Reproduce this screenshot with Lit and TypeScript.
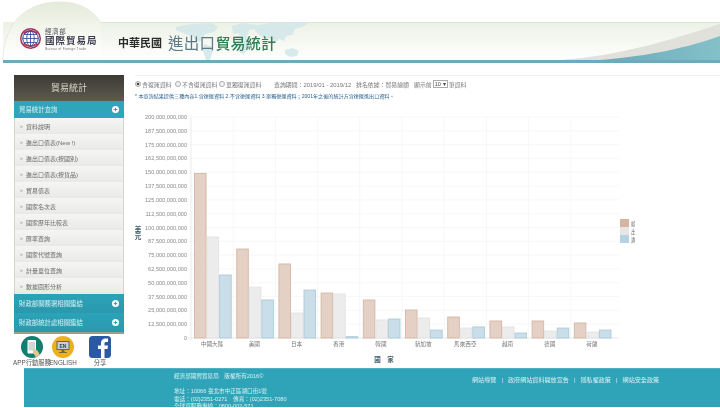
import { LitElement, html, css, svg } from "lit";
import { customElement } from "lit/decorators.js";

const MENU = [
  "資料說明",
  "進出口值表(New !)",
  "進出口值表(按國別)",
  "進出口值表(按貨品)",
  "貿易值表",
  "國家名次表",
  "國家歷年比較表",
  "匯率查詢",
  "國家代號查詢",
  "計量單位查詢",
  "數據圖形分析",
];

// values in billions: total, export, import
const DATA: [string, number, number, number][] = [
  ["中國大陸", 148.9, 91.4, 57],
  ["美國", 80.5, 46, 34.4],
  ["日本", 67, 22.6, 43.4],
  ["香港", 40.7, 39.8, 1.2],
  ["韓國", 34.4, 16.3, 17.2],
  ["新加坡", 25.3, 18.1, 7.2],
  ["馬來西亞", 19, 9, 10],
  ["越南", 15.4, 10, 4.5],
  ["德國", 15.4, 6.3, 9],
  ["荷蘭", 13.6, 5.4, 7.2],
];

const SERIES = [
  { name: "總額", fill: "#e4d0c4", line: "#d3b8a8" },
  { name: "出口", fill: "#ececec", line: "#e3e3e3" },
  { name: "進口", fill: "#c9dee8", line: "#aecbd9" },
];

const X0 = 192;
const Y0 = 338;
const CAT_W = 42.2;
const PX_PER_B = 221 / 200;

const fmt = (n: number) => n.toLocaleString("en-US");

@customElement("app-root")
export class AppRoot extends LitElement {
  static styles = css`
    :host {
      display: block;
      width: 720px;
      height: 408px;
      overflow: hidden;
      background: #fff;
      font-family: "Liberation Sans", "Noto Sans CJK TC", sans-serif;
      color: #666;
      filter: blur(0.3px);
    }
    .header {
      position: relative;
      height: 64px;
    }
    .header-art {
      position: absolute;
      inset: 0;
    }
    .brand {
      position: relative;
      display: flex;
      align-items: flex-start;
      padding: 28px 0 0 20px;
    }
    .logo-text {
      display: flex;
      flex-direction: column;
      margin-left: 4px;
      width: 54px;
      color: #4a4a55;
      white-space: nowrap;
    }
    .org-top {
      font-size: 6.5px;
      line-height: 7px;
      letter-spacing: 0.6px;
    }
    .org-name {
      font-size: 9.5px;
      line-height: 12px;
      font-weight: 700;
      letter-spacing: 1px;
      color: #3c3c50;
    }
    .org-en {
      font-size: 3.4px;
      line-height: 4px;
      letter-spacing: 0.2px;
      color: #777;
    }
    .title {
      display: flex;
      align-items: center;
      margin-left: 19px;
      margin-top: 5px;
      height: 18px;
      white-space: nowrap;
    }
    .title-roc {
      font-size: 11px;
      font-weight: 700;
      color: #2b2b2b;
      margin-right: 6px;
    }
    .title-a {
      font-size: 15.5px;
      letter-spacing: 0.3px;
      color: #5b7a88;
    }
    .title-b {
      font-size: 15px;
      letter-spacing: 0.2px;
      font-weight: 500;
      color: #2f7d52;
    }
    .body {
      display: flex;
      height: 304px;
      padding-top: 11px;
      box-sizing: border-box;
    }
    .side {
      width: 110px;
      margin-left: 14px;
      flex: none;
    }
    .menu {
      border-bottom: 2px solid #9c9c94;
    }
    .menu-title {
      height: 26px;
      line-height: 26px;
      text-align: center;
      font-size: 9px;
      color: #d9d6c8;
      background: linear-gradient(#3c3a33, #5d5a51);
    }
    .group {
      display: flex;
      align-items: center;
      justify-content: space-between;
      padding: 0 5px;
      color: #d8f0f4;
      background: linear-gradient(#2ba3b8, #2b98ad);
      font-size: 6.4px;
    }
    .group.first {
      height: 17px;
      background: #2ea5ba;
    }
    .group.low {
      height: 19px;
    }
    .plus {
      width: 7px;
      height: 7px;
      flex: none;
    }
    .item {
      display: flex;
      align-items: center;
      height: 16px;
      box-sizing: border-box;
      padding-left: 5px;
      font-size: 6px;
      color: #6c6c6c;
      background: linear-gradient(#f5f5f5, #e9e9e7);
      border-left: 1px solid #d5d5d0;
      border-right: 1px solid #d5d5d0;
    }
    .item i {
      font-style: normal;
      color: #999;
      width: 6px;
      font-size: 5px;
    }
    .links {
      display: flex;
      margin-top: 2px;
    }
    .link {
      display: flex;
      flex-direction: column;
      align-items: center;
      font-size: 6.3px;
      line-height: 8px;
      color: #555;
      white-space: nowrap;
    }
    .link svg {
      display: block;
      margin-bottom: 1px;
    }
    .link.app {
      width: 36px;
    }
    .link.en {
      width: 26px;
      margin-left: 0;
    }
    .link.fb {
      width: 22px;
      margin-left: 13px;
    }
    .main {
      flex: 1;
      margin-left: 11px;
      border-top: 1px solid #f2f2f2;
      margin-top: 0;
      min-width: 0;
    }
    .filters {
      display: flex;
      align-items: center;
      height: 16px;
      margin-top: 0;
      font-size: 5.9px;
      color: #777;
      white-space: nowrap;
    }
    .radio {
      display: flex;
      align-items: center;
      margin-right: 4px;
      width: 40px;
    }
    .radio b {
      width: 4px;
      height: 4px;
      margin-right: 1px;
      border: 0.5px solid #aaa;
      border-radius: 50%;
      background: #f4f4f4;
      flex: none;
    }
    .radio.on b {
      background: radial-gradient(#444 45%, #ddd 55%);
    }
    .radio.on {
      width: 37px;
      margin-right: 3px;
    }
    .period {
      margin-left: 11px;
      width: 82px;
    }
    .rank {
      width: 58px;
    }
    .top-n {
      display: flex;
      align-items: center;
    }
    .select {
      display: flex;
      align-items: center;
      justify-content: space-between;
      width: 15px;
      height: 8px;
      box-sizing: border-box;
      margin: 0 1px;
      padding: 0 1px;
      border: 0.5px solid #aaa;
      font-size: 5.5px;
      color: #444;
    }
    .note {
      font-size: 5.1px;
      line-height: 8px;
      height: 8px;
      margin-top: 0;
      color: #2b6490;
      white-space: nowrap;
    }
    .chart {
      display: block;
      width: 500px;
      height: 262px;
      margin-top: 5px;
    }
    .chart text {
      font-family: "Liberation Sans", "Noto Sans CJK TC", sans-serif;
    }
    .footer {
      height: 39px;
      margin-left: 24px;
      display: flex;
      overflow: hidden;
      color: #d9f0f4;
      background: #2fa4b8;
      border-top: 1px solid #4fb2c4;
      box-sizing: border-box;
      font-size: 5.6px;
      line-height: 7.5px;
    }
    .contact {
      width: 298px;
      padding: 4px 0 0 150px;
      flex: none;
      box-sizing: content-box;
      white-space: nowrap;
    }
    .contact p {
      margin: 0;
    }
    .contact .gap {
      height: 7.5px;
    }
    .nav {
      display: flex;
      gap: 5px;
      margin-left: 0;
      padding-top: 7px;
      font-size: 6.1px;
      white-space: nowrap;
      height: 8px;
      align-items: center;
    }
  `;

  private plus(color: string) {
    return html`<svg class="plus" viewBox="0 0 14 14">
      <circle cx="7" cy="7" r="7" fill="#fff"></circle>
      <path d="M7 3.5v7M3.5 7h7" stroke=${color} stroke-width="2"></path>
    </svg>`;
  }

  private headerArt() {
    return html`<svg class="header-art" width="720" height="64" viewBox="0 0 720 64">
      <defs>
        <linearGradient id="band" x1="0" x2="0" y1="0" y2="1">
          <stop offset="0" stop-color="#ecf1e4"></stop>
          <stop offset="1" stop-color="#ffffff"></stop>
        </linearGradient>
        <linearGradient id="dome" x1="0" x2="0" y1="0" y2="1">
          <stop offset="0" stop-color="#e5ebd9"></stop>
          <stop offset="0.7" stop-color="#fafbf7"></stop>
          <stop offset="1" stop-color="#ffffff"></stop>
        </linearGradient>
        <linearGradient id="wave" x1="0" x2="1" y1="0" y2="0">
          <stop offset="0" stop-color="#6fa8bb"></stop>
          <stop offset="1" stop-color="#83c1c9"></stop>
        </linearGradient>
      </defs>
      <rect x="3" y="22" width="717" height="38" fill="url(#band)"></rect>
      <rect x="90" y="22" width="630" height="1" fill="#dfe5d5"></rect>
      <path d="M3 60C3 30 20 2 60 2C80 2 93 10 101 23L101 60Z" fill="url(#dome)"></path>
      <path d="M3 60C3 30 20 2 60 2C80 2 93 10 101 23" fill="none" stroke="#dfe5d5" stroke-width="0.7"></path>
      <g fill="#d3e7ea" opacity="0.85">
        <path d="M176 27l14-3 22-1 6 4-4 5-9 2-4 7-5 1-3-6-8-2-9-4z"></path>
        <path d="M204 44l7 2 2 5-3 9h-4l-3-9z"></path>
        <path d="M232 26l10-3 16 2-3 4-6 1-1 5-6 1-4-3-5 1z"></path>
        <path d="M235 36l10-1 6 4-2 8-5 7-4-1-3-8z"></path>
        <path d="M252 26l18-3 30-1 8 1-6 4-7 2-3 6-6 1-2 5-5-2-4 4-4-4-8-1-7-6z"></path>
        <path d="M285 50l8-2 6 3-2 5-7 1-5-3z"></path>
      </g>
      <path d="M560 60C620 56 670 40 720 24V60Z" fill="#e0e1db"></path>
      <path d="M600 60C650 56 690 47 720 36V60Z" fill="url(#wave)"></path>
      <rect x="3" y="60" width="717" height="3" fill="#6cabbd"></rect>
    </svg>`;
  }

  private logo() {
    return html`<svg width="21" height="21" viewBox="0 0 42 42">
      <circle cx="21" cy="21" r="19.5" fill="#fff" stroke="#a8324f" stroke-width="3"></circle>
      <circle cx="21" cy="21" r="15.5" fill="none" stroke="#2b3f8f" stroke-width="2"></circle>
      <ellipse cx="21" cy="21" rx="7.5" ry="15.5" fill="none" stroke="#2b3f8f" stroke-width="1.6"></ellipse>
      <path d="M21 5v32M5.5 21h31M8 13h26M8 29h26" stroke="#2b3f8f" stroke-width="1.6"></path>
      <path d="M6 10Q21 -2 36 10L33 12Q21 3 9 12Z" fill="#8c2f6f"></path>
      <path d="M6 32Q21 44 36 32L33 30Q21 39 9 30Z" fill="#b03050"></path>
    </svg>`;
  }

  private chart() {
    const ticks = Array.from({ length: 17 }, (_, i) => i * 12.5);
    const right = 620;
    return html`<svg class="chart" viewBox="136 105 500 262">
      ${ticks.map((t) => {
        const y = Y0 - t * PX_PER_B;
        return svg`
          <line x1="189" x2=${right} y1=${y} y2=${y} stroke=${t === 0 ? "#dcdcdc" : "#f3f3f3"} stroke-width="0.7"></line>
          <text x="188" y=${y + 2} text-anchor="end" font-size="5.6" fill="#8a8a8a">${fmt(t * 1e9)}</text>`;
      })}
      ${DATA.map((_, i) => svg`<line x1=${X0 + i * CAT_W} x2=${X0 + i * CAT_W} y1="117" y2=${Y0 + 2}
          stroke=${i === 0 ? "#e2e2e2" : "#f3f3f3"} stroke-width="0.7"></line>`)}
      ${DATA.map(([name, ...vals], i) => {
        const cx = X0 + i * CAT_W + CAT_W / 2;
        return svg`
          ${vals.map((v, s) => {
            const h = v * PX_PER_B;
            return svg`<rect x=${X0 + i * CAT_W + 3.5 + s * 12.55} y=${Y0 - h} width="11.6" height=${h}
              fill=${SERIES[s].fill} stroke=${SERIES[s].line} stroke-width="0.9"></rect>`;
          })}
          <text x=${cx} y="346" text-anchor="middle" font-size="5.6" fill="#777">${name}</text>`;
      })}
      <text x="139" y="232" text-anchor="middle" font-size="6.5" font-weight="700" fill="#3f5a68">美</text>
      <text x="139" y="239" text-anchor="middle" font-size="6.5" font-weight="700" fill="#3f5a68">元</text>
      <text x="385" y="362" text-anchor="middle" font-size="6.5" font-weight="700" fill="#3f5a68">國　家</text>
      ${SERIES.map(
        (s, i) => svg`
        <rect x="621" y=${219 + i * 8} width="9" height="8" fill=${["#d5b5a0", "#e6e6e6", "#b4d2e0"][i]}></rect>
        <text x="632" y=${225.5 + i * 8} font-size="5.6" fill="#777">${s.name}</text>`
      )}
    </svg>`;
  }

  render() {
    return html`
      <div class="header">
        ${this.headerArt()}
        <div class="brand">
          ${this.logo()}
          <div class="logo-text">
            <span class="org-top">經濟部</span>
            <span class="org-name">國際貿易局</span>
            <span class="org-en">Bureau of Foreign Trade</span>
          </div>
          <div class="title">
            <span class="title-roc">中華民國</span>
            <span class="title-a">進出口</span>
            <span class="title-b">貿易統計</span>
          </div>
        </div>
      </div>

      <div class="body">
        <div class="side">
          <div class="menu">
            <div class="menu-title">貿易統計</div>
            <div class="group first"><span>貿易統計查詢</span>${this.plus("#2ea5ba")}</div>
            ${MENU.map((m) => html`<div class="item"><i>»</i>${m}</div>`)}
            <div class="group low"><span>財政部關務署相關連結</span>${this.plus("#2ea5ba")}</div>
            <div class="group low"><span>財政部統計處相關連結</span>${this.plus("#2ea5ba")}</div>
          </div>
          <div class="links">
            <div class="link app">
              <svg width="22" height="22" viewBox="0 0 44 44">
                <circle cx="22" cy="22" r="22" fill="#0f7f70"></circle>
                <rect x="13" y="8" width="17" height="27" rx="2" fill="#fff"></rect>
                <rect x="15" y="12" width="13" height="17" fill="#cfd8d6"></rect>
                <path d="M25 26l8 3 5 9-8 5-6-10z" fill="#e6c48e"></path>
              </svg>
              <span>APP行動服務</span>
            </div>
            <div class="link en">
              <svg width="22" height="22" viewBox="0 0 44 44">
                <circle cx="22" cy="22" r="22" fill="#ecb021"></circle>
                <rect x="9" y="10" width="26" height="18" fill="#5f6470"></rect>
                <rect x="11" y="12" width="22" height="14" fill="#c9ced8"></rect>
                <text x="22" y="23" text-anchor="middle" font-size="10" font-weight="700" fill="#3a3f52">EN</text>
                <path d="M19 28h6v4h-6zM14 32h16v2H14z" fill="#7a6a3a"></path>
              </svg>
              <span>ENGLISH</span>
            </div>
            <div class="link fb">
              <svg width="22" height="22" viewBox="0 0 44 44">
                <rect width="44" height="44" rx="7" fill="#2b5aa2"></rect>
                <path d="M24 44V26h-6v-7h6v-5c0-6 4-9 9-9h5v7h-4c-2 0-3 1-3 3v4h7l-1 7h-6v18z" fill="#fff"></path>
              </svg>
              <span>分享</span>
            </div>
          </div>
        </div>

        <div class="main">
          <div class="filters">
            <span class="radio on"><b></b>含復運資料</span>
            <span class="radio"><b></b>不含復運資料</span>
            <span class="radio"><b></b>單獨復運資料</span>
            <span class="period">查詢期間：2019/01 - 2019/12</span>
            <span class="rank">排名依據：貿易總額</span>
            <span class="top-n">顯示前<span class="select">10<span>▾</span></span>筆資料</span>
          </div>
          <div class="note">* 本查詢結果提供三種內容1.含復運資料 2.不含復運資料 3.單獨復運資料；2001年之後的統計方含復運進出口資料。</div>
          ${this.chart()}
        </div>
      </div>

      <div class="footer">
        <div class="contact">
          <p>經濟部國際貿易局　版權所有2016©</p>
          <p class="gap"></p>
          <p>地址：10066 臺北市中正區湖口街1號</p>
          <p>電話：(02)2351-0271　傳真：(02)2351-7080</p>
          <p>全球資服務專線：0800-002-571</p>
        </div>
        <div class="nav">
          <span>網站導覽</span><span>|</span><span>政府網站資料開放宣告</span><span>|</span><span>隱私權政策</span><span>|</span><span>網站安全政策</span>
        </div>
      </div>
    `;
  }
}
